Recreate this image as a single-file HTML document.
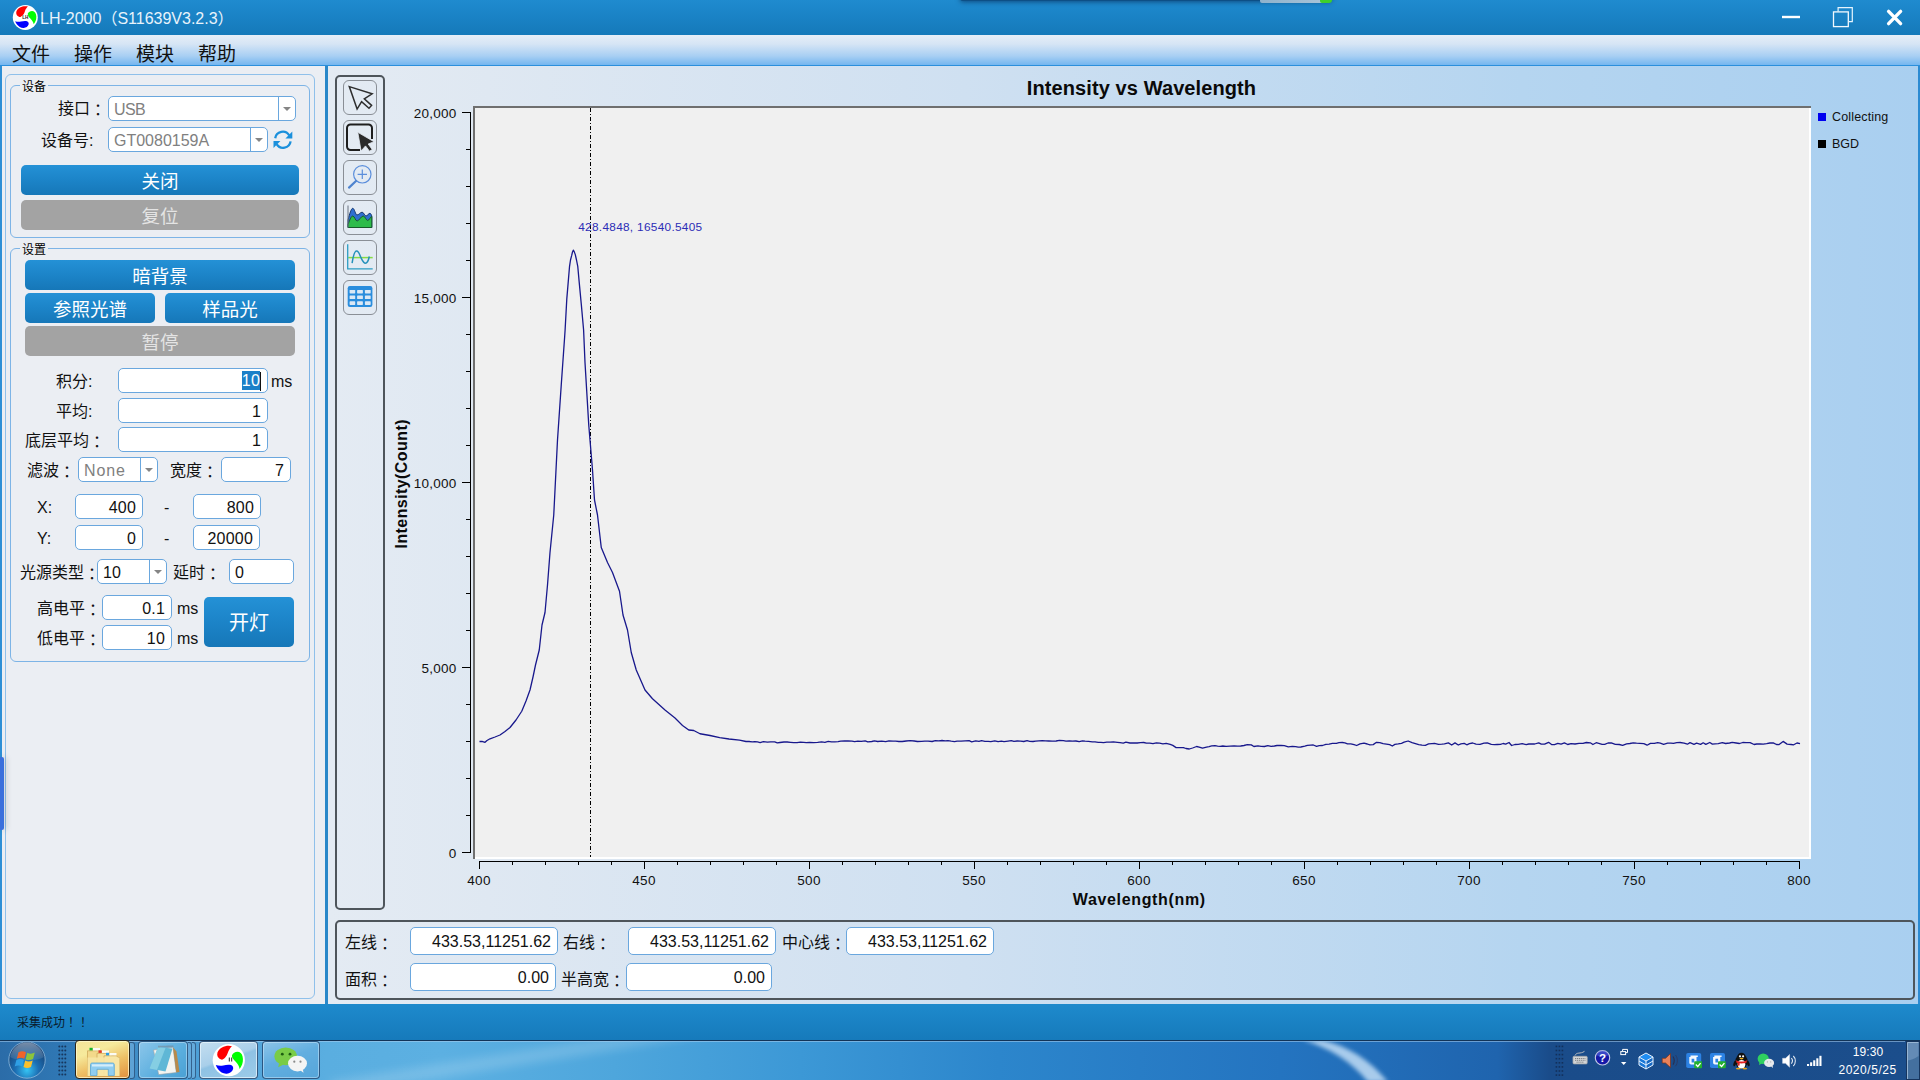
<!DOCTYPE html>
<html lang="zh-CN">
<head>
<meta charset="utf-8">
<title>LH-2000</title>
<style>
*{box-sizing:border-box;margin:0;padding:0}
html,body{width:1920px;height:1080px;overflow:hidden;background:#1a82c4}
body{position:relative;font-family:"Liberation Sans","Noto Sans CJK SC",sans-serif;font-size:15px;color:#111}
.abs{position:absolute}
#titlebar{left:0;top:0;width:1920px;height:35px;background:linear-gradient(#1f8bcf,#1a83c6 45%,#1579b9)}
#title{left:40px;top:8px;font-size:16px;color:#e8f3fb;white-space:nowrap;line-height:22px}
#menubar{left:0;top:35px;width:1920px;height:31px;background:linear-gradient(#e6eef7 0,#d6e5f5 30%,#a8cff3 70%,#74b6ef 100%);border-bottom:1px solid #2b8fdc}
.menu{position:absolute;top:43px;font-size:19px;line-height:24px;color:#101010;white-space:nowrap}
#left{left:0;top:66px;width:326px;height:938px;background:#ebeef3;border-left:2px solid #2d8fd6}
#split{left:325px;top:66px;width:3px;height:938px;background:#2a88c9}
#right{left:328px;top:66px;width:1592px;height:938px;background:linear-gradient(90deg,#e4ebf3 0,#dfe8f2 10%,#cfe0f1 40%,#b5d5f0 75%,#a9cff0 100%)}
#status{left:0;top:1004px;width:1920px;height:36px;background:linear-gradient(#1e8acc,#1a82c4 50%,#167abb)}
#statustext{left:17px;top:1015px;font-size:12px;line-height:16px;color:#0a1a2a;white-space:nowrap}
#taskbar{left:0;top:1040px;width:1920px;height:40px;background:linear-gradient(90deg,#2b6ca8 0,#3079b6 3.6%,#4d9fd6 10%,#5aaee0 17%,#5cb0e2 23%,#4ea6dc 32%,#3c98d6 41.7%,#2c86cc 52%,#2474c0 66.7%,#1f64ae 78%,#1a4c8a 80.7%,#1b4e8c 100%);border-top:1px solid #123458}
.frame{position:absolute;border:1px solid #7db4e6;border-radius:6px}
.gtitle{position:absolute;font-size:12px;line-height:14px;margin-top:1px;background:#ebeef3;padding:0 2px;color:#000}
.lbl{position:absolute;font-size:16px;line-height:20px;padding-top:1px;white-space:nowrap;color:#111}
.inp{position:absolute;height:25px;background:#fff;border:1px solid #6aa7de;border-radius:5px;font-size:16px;letter-spacing:.2px;line-height:25px;text-align:right;padding-right:6px;white-space:nowrap;color:#111}
.cmb{position:absolute;height:25px;background:#fff;border:1px solid #6aa7de;border-radius:5px;font-size:16px;line-height:25px;padding-left:5px;white-space:nowrap;color:#808080}
.cmb i{position:absolute;right:16px;top:0;width:1px;height:23px;background:#6aa7de}
.cmb b{position:absolute;right:4px;top:10px;width:0;height:0;border-left:4px solid transparent;border-right:4px solid transparent;border-top:4px solid #858585}
.btn{position:absolute;height:30px;border-radius:5px;background:linear-gradient(#2491d6,#1c84c8 50%,#1677b8);color:#fff;font-size:18.5px;line-height:34px;text-align:center;white-space:nowrap}
.btn.gray{background:#a3a3a3;color:#e4e4e4}
.tbtn{position:absolute;left:343px;width:34px;height:35px;border:1px solid #8a8f96;border-radius:6px}
.tbtn svg{position:absolute;left:-1px;top:-1px}
.dark{position:absolute;border:2px solid #4e555b;border-radius:5px}
.tick{font-size:13.5px;fill:#111}
.c{font-family:"Noto Sans CJK TC","Noto Sans CJK SC",sans-serif;line-height:0;position:relative;top:1.5px}
.c2{font-family:"Noto Sans CJK TC","Noto Sans CJK SC",sans-serif;line-height:0}
</style>
</head>
<body>
<div id="titlebar" class="abs"></div>
<div id="title" class="abs">LH-2000（S11639V3.2.3）</div>
<div id="menubar" class="abs"></div>
<div class="menu" style="left:12px">文件</div>
<div class="menu" style="left:74px">操作</div>
<div class="menu" style="left:136px">模块</div>
<div class="menu" style="left:198px">帮助</div>
<div id="left" class="abs"></div>
<div id="split" class="abs"></div>
<div id="right" class="abs"></div>
<div class="abs" style="left:1918px;top:66px;width:2px;height:938px;background:#2b8ad2"></div>
<div id="status" class="abs"></div>
<div id="statustext" class="abs">采集成功<span class="c2" lang="zh-TW">！！</span></div>
<div id="taskbar" class="abs"></div>
<!--TITLECTL-->
<svg class="abs" style="left:10px;top:2px" width="32" height="32" viewBox="10 2 32 32"><circle cx="25.3" cy="17.5" r="12.5" fill="#fff"/><path d="M28 6.6C26.8 7.6 25.6 9.2 25 11C24.4 13 23.6 14.6 22.4 15.6C21.4 16.6 20.4 17.4 19.4 17C17.6 16.4 16.2 14.8 16.2 13C16.2 10.6 17.8 8.8 20 7.6C22.4 6.2 25.6 5.8 28 6.6Z" fill="#f00"/><path d="M27.8 13.6C28.6 12 30.2 11 32 11C34 11 35.4 12.4 36 14.4C36.8 17 36.2 20.4 34.8 22.6C34.4 23.4 34 24 33.7 24.3C33.5 22.8 32.8 21.4 31.8 20.2C30.8 18.8 29.4 17.6 28.6 16.4C28 15.4 27.6 14.4 27.8 13.6Z" fill="#0f0"/><path d="M15.2 21.2C17 21.8 19 21.9 21 21.5C23.4 21 25.8 20.8 27.4 21.4C28.6 22 29 23.4 28.6 24.6C28 26.6 26 27.8 23.8 28C21 28.2 18.6 26.6 17 24.6C16.2 23.6 15.6 22.4 15.2 21.2Z" fill="#00f"/><text x="25.3" y="19.4" font-size="4.6px" font-weight="bold" text-anchor="middle" fill="#222" font-family="Liberation Sans, sans-serif">LH</text></svg>
<svg class="abs" style="left:1776px;top:0" width="136" height="35" viewBox="1776 0 136 35"><path d="M1782 17H1800" stroke="#fff" stroke-width="2.4"/><path d="M1838.1 11.5V7.7H1852.3V21.6H1848.8" fill="none" stroke="#e6f4fd" stroke-width="1.2"/><rect x="1833.5" y="11.9" width="14.8" height="14.7" fill="none" stroke="#f2f9fe" stroke-width="1.3"/><path d="M1888.6 11.4L1900.6 23.6M1900.6 11.4L1888.6 23.6" stroke="#fff" stroke-width="3.4" stroke-linecap="round"/></svg>
<div class="abs" style="left:960px;top:-8px;width:372px;height:9px;border-radius:3px;box-shadow:0 1px 5px rgba(0,20,60,.55);background:#0d4f86"></div>
<div class="abs" style="left:1260px;top:0;width:66px;height:3px;background:linear-gradient(90deg,#8fb2cc,#a8c4d8);border-radius:0 0 2px 2px"></div>
<div class="abs" style="left:1320px;top:0;width:12px;height:3px;background:#3fd02a;border-radius:0 0 3px 2px"></div>
<!--/TITLECTL-->
<!--LEFT-->
<div class="frame" style="left:5px;top:74px;width:310px;height:925px;border-color:#8fc0ea"></div>
<div class="frame" style="left:10px;top:85px;width:300px;height:153px"></div>
<div class="gtitle" style="left:20px;top:79px">设备</div>
<div class="lbl" style="left:58px;top:98px">接口<span class="c" lang="zh-TW">：</span></div>
<div class="cmb" style="left:108px;top:96px;width:188px;letter-spacing:-.6px">USB<i></i><b></b></div>
<div class="lbl" style="left:41px;top:130px">设备号:</div>
<div class="cmb" style="left:108px;top:127px;width:160px">GT0080159A<i></i><b></b></div>
<svg class="abs" style="left:272px;top:129px" width="22" height="22" viewBox="0 0 22 22"><g fill="none" stroke="#1b90dc" stroke-width="2.3"><path d="M3.2 9.2A7.6 7.6 0 0 1 17.2 6.4"/><path d="M18.6 12.4A7.6 7.6 0 0 1 4.6 15.2"/></g><path d="M20.3 2.6V9.6H13.4Z" fill="#1b90dc"/><path d="M1.5 19V12H8.4Z" fill="#1b90dc"/></svg>
<div class="btn" style="left:21px;top:165px;width:278px">关闭</div>
<div class="btn gray" style="left:21px;top:200px;width:278px">复位</div>
<div class="frame" style="left:10px;top:248px;width:300px;height:414px"></div>
<div class="gtitle" style="left:20px;top:242px">设置</div>
<div class="btn" style="left:25px;top:260px;width:270px">暗背景</div>
<div class="btn" style="left:25px;top:293px;width:130px">参照光谱</div>
<div class="btn" style="left:165px;top:293px;width:130px">样品光</div>
<div class="btn gray" style="left:25px;top:326px;width:270px">暂停</div>
<div class="lbl" style="left:56px;top:371px">积分:</div>
<div class="inp" style="left:118px;top:368px;width:150px"><span style="background:#1c80c8;color:#fff;display:inline-block;height:19px;line-height:19px;vertical-align:1px">10</span><span style="display:inline-block;width:1px;height:19px;background:#111;vertical-align:-4px"></span></div>
<div class="lbl" style="left:271px;top:371px">ms</div>
<div class="lbl" style="left:56px;top:401px">平均:</div>
<div class="inp" style="left:118px;top:398px;width:150px">1</div>
<div class="lbl" style="left:25px;top:430px">底层平均<span class="c" lang="zh-TW">：</span></div>
<div class="inp" style="left:118px;top:427px;width:150px">1</div>
<div class="lbl" style="left:27px;top:460px">滤波<span class="c" lang="zh-TW">：</span></div>
<div class="cmb" style="left:78px;top:457px;width:80px;letter-spacing:.9px">None<i></i><b></b></div>
<div class="lbl" style="left:170px;top:460px">宽度<span class="c" lang="zh-TW">：</span></div>
<div class="inp" style="left:221px;top:457px;width:70px">7</div>
<div class="lbl" style="left:37px;top:497px">X:</div>
<div class="inp" style="left:75px;top:494px;width:68px">400</div>
<div class="lbl" style="left:164px;top:497px">-</div>
<div class="inp" style="left:193px;top:494px;width:68px">800</div>
<div class="lbl" style="left:37px;top:528px">Y:</div>
<div class="inp" style="left:75px;top:525px;width:68px">0</div>
<div class="lbl" style="left:164px;top:528px">-</div>
<div class="inp" style="left:193px;top:525px;width:67px">20000</div>
<div class="lbl" style="left:20px;top:562px">光源类型<span class="c" lang="zh-TW">：</span></div>
<div class="cmb" style="left:97px;top:559px;width:70px;color:#111">10<i></i><b></b></div>
<div class="lbl" style="left:173px;top:562px">延时<span class="c" lang="zh-TW">：</span></div>
<div class="inp" style="left:229px;top:559px;width:65px;text-align:left;padding-left:5px">0</div>
<div class="lbl" style="left:37px;top:598px">高电平<span class="c" lang="zh-TW">：</span></div>
<div class="inp" style="left:102px;top:595px;width:70px">0.1</div>
<div class="lbl" style="left:177px;top:598px">ms</div>
<div class="lbl" style="left:37px;top:628px">低电平<span class="c" lang="zh-TW">：</span></div>
<div class="inp" style="left:102px;top:625px;width:70px">10</div>
<div class="lbl" style="left:177px;top:628px">ms</div>
<div class="btn" style="left:204px;top:597px;width:90px;height:50px;line-height:53px;font-size:20px">开灯</div>
<div class="abs" style="left:0;top:757px;width:4px;height:73px;background:#3a6fdc;border-radius:0 2px 2px 0;box-shadow:2px 0 6px rgba(0,0,0,.18)"></div>
<!--/LEFT-->
<!--TOOLBAR-->
<div class="dark" style="left:335px;top:75px;width:50px;height:835px"></div>
<div class="tbtn" style="top:80px"><svg width="34" height="34" viewBox="0 0 34 34"><path d="M6.3 6.6L29.1 13.8L21.3 18.8L28.6 25.4L26 28.2L18.6 21.6L14.1 29.1Z" fill="none" stroke="#2e2e2e" stroke-width="1.5" stroke-linejoin="miter"/></svg></div>
<div class="tbtn" style="top:120px"><svg width="34" height="34" viewBox="0 0 34 34"><path d="M17 30H7.5A3.5 3.5 0 0 1 4 26.5V8A3.5 3.5 0 0 1 7.5 4.5H25.5A3.5 3.5 0 0 1 29 8V19" fill="none" stroke="#1e1e1e" stroke-width="2"/><path d="M14.8 12.3L31 21.7L25.2 24L29.2 29.5L26.5 31.2L22.5 25.9L18.1 31Z" fill="#2a2a2a" stroke="#e4ebf3" stroke-width="0.8"/></svg></div>
<div class="tbtn" style="top:160px"><svg width="34" height="34" viewBox="0 0 34 34"><circle cx="19.3" cy="14.3" r="8.7" fill="none" stroke="#5b8edb" stroke-width="1.2"/><path d="M14.6 14.3H24M19.3 9.6V19" stroke="#5b8edb" stroke-width="1.2"/><path d="M13 21L6 27.6" stroke="#4f84cf" stroke-width="2.2" stroke-linecap="round"/></svg></div>
<div class="tbtn" style="top:200px"><svg width="34" height="34" viewBox="0 0 34 34"><path d="M5 27.5V20C6.5 14 8.3 8.3 9.7 8.3C11.5 8.3 12.5 15 14 15C15.8 15 17.3 12.2 19.1 12.2C20.8 12.2 21.6 16 23 16C24.4 16 25.6 13.3 26.9 13.3C27.8 13.3 28.4 15 28.8 16V27.5Z" fill="#2e6fd0" stroke="#17386e" stroke-width="1"/><path d="M5 27.5V24.4C6.5 21 8 16 9.7 16C11.6 16 12.4 21 14.1 21C16 21 18.2 16 20.2 16C22 16 23.2 20.5 24.7 20.5C26.2 20.5 27.4 16.6 28.8 16.6V27.5Z" fill="#2dbb4a" stroke="#175a2a" stroke-width="1"/><path d="M5 5.5V27.5" stroke="#6b7280" stroke-width="1"/></svg></div>
<div class="tbtn" style="top:240px"><svg width="34" height="34" viewBox="0 0 34 34"><path d="M5.2 17.6H29.7" stroke="#86dc45" stroke-width="1.5"/><path d="M4.7 4.3V28.8H29.7" fill="none" stroke="#2d9dc4" stroke-width="1.3"/><path d="M9.1 23.2C10 17 11.5 11 13.6 11C16 11 16.6 15 18 17.7C19.4 20.5 20.6 23.2 22.4 23.2C24.4 23.2 25.6 20 26.3 16.5" fill="none" stroke="#2490ba" stroke-width="1.5"/></svg></div>
<div class="tbtn" style="top:280px"><svg width="34" height="34" viewBox="0 0 34 34"><rect x="4.7" y="6.1" width="24.7" height="20.8" rx="2.2" fill="#2a8ddd"/><g fill="#dbe8f5"><rect x="6.6" y="9.9" width="5.6" height="3.5" rx=".6"/><rect x="14.1" y="9.9" width="5.8" height="3.5" rx=".6"/><rect x="21.9" y="9.9" width="5.8" height="3.5" rx=".6"/><rect x="6.6" y="15.5" width="5.6" height="3.6" rx=".6"/><rect x="14.1" y="15.5" width="5.8" height="3.6" rx=".6"/><rect x="21.9" y="15.5" width="5.8" height="3.6" rx=".6"/><rect x="6.6" y="21.3" width="5.6" height="3.6" rx=".6"/><rect x="14.1" y="21.3" width="5.8" height="3.6" rx=".6"/><rect x="21.9" y="21.3" width="5.8" height="3.6" rx=".6"/></g></svg></div>
<!--/TOOLBAR-->
<!--CHART-->
<svg class="abs" style="left:386px;top:67px" width="1532" height="849" viewBox="386 67 1532 849" font-family="Liberation Sans, sans-serif">
<rect x="473" y="106" width="1338" height="753" fill="#fff"/>
<path d="M473 106H1811V108H475V859H473Z" fill="#6f6f6f"/>
<rect x="475" y="108" width="1334" height="749" fill="#f0f0f0"/>
<path d="M470.5 112V853M461.5 852.5H471M465.5 815.5H471M465.5 778.5H471M465.5 741.5H471M465.5 704.5H471M461.5 667.5H471M465.5 630.5H471M465.5 593.5H471M465.5 556.5H471M465.5 519.5H471M461.5 482.5H471M465.5 445.5H471M465.5 408.5H471M465.5 371.5H471M465.5 334.5H471M461.5 297.5H471M465.5 260.5H471M465.5 223.5H471M465.5 186.5H471M465.5 149.5H471M461.5 112.5H471" stroke="#000" stroke-width="1.4" fill="none" shape-rendering="crispEdges"/>
<path d="M479 861.5H1800M479.5 861V869M512.5 861V865M545.5 861V865M578.5 861V865M611.5 861V865M644.5 861V869M677.5 861V865M710.5 861V865M743.5 861V865M776.5 861V865M809.5 861V869M842.5 861V865M875.5 861V865M908.5 861V865M941.5 861V865M974.5 861V869M1007.5 861V865M1040.5 861V865M1073.5 861V865M1106.5 861V865M1139.5 861V869M1172.5 861V865M1205.5 861V865M1238.5 861V865M1271.5 861V865M1304.5 861V869M1337.5 861V865M1370.5 861V865M1403.5 861V865M1436.5 861V865M1469.5 861V869M1502.5 861V865M1535.5 861V865M1568.5 861V865M1601.5 861V865M1634.5 861V869M1667.5 861V865M1700.5 861V865M1733.5 861V865M1766.5 861V865M1799.5 861V869" stroke="#000" stroke-width="1.4" fill="none" shape-rendering="crispEdges"/>
<text class="tick" x="456.5" y="857.7" text-anchor="end" letter-spacing="0.25">0</text>
<text class="tick" x="456.5" y="672.7" text-anchor="end" letter-spacing="0.25">5,000</text>
<text class="tick" x="456.5" y="487.7" text-anchor="end" letter-spacing="0.25">10,000</text>
<text class="tick" x="456.5" y="302.7" text-anchor="end" letter-spacing="0.25">15,000</text>
<text class="tick" x="456.5" y="117.7" text-anchor="end" letter-spacing="0.25">20,000</text>
<text class="tick" x="479.0" y="885" text-anchor="middle" letter-spacing="0.3">400</text>
<text class="tick" x="644.0" y="885" text-anchor="middle" letter-spacing="0.3">450</text>
<text class="tick" x="809.0" y="885" text-anchor="middle" letter-spacing="0.3">500</text>
<text class="tick" x="974.0" y="885" text-anchor="middle" letter-spacing="0.3">550</text>
<text class="tick" x="1139.0" y="885" text-anchor="middle" letter-spacing="0.3">600</text>
<text class="tick" x="1304.0" y="885" text-anchor="middle" letter-spacing="0.3">650</text>
<text class="tick" x="1469.0" y="885" text-anchor="middle" letter-spacing="0.3">700</text>
<text class="tick" x="1634.0" y="885" text-anchor="middle" letter-spacing="0.3">750</text>
<text class="tick" x="1799.0" y="885" text-anchor="middle" letter-spacing="0.3">800</text>
<text x="1141.5" y="94.6" text-anchor="middle" font-size="20px" font-weight="bold" fill="#0a0a0a" letter-spacing="0.1">Intensity vs Wavelength</text>
<text x="1139.3" y="904.8" text-anchor="middle" font-size="16px" font-weight="bold" fill="#0a0a0a" letter-spacing=".66">Wavelength(nm)</text>
<text transform="translate(407 483.8) rotate(-90)" text-anchor="middle" font-size="16px" font-weight="bold" fill="#0a0a0a" letter-spacing=".42">Intensity(Count)</text>
<rect x="1818" y="113" width="8" height="8" fill="#0000f0"/><text x="1832" y="121" font-size="12.5px" fill="#111" letter-spacing="0.15">Collecting</text>
<rect x="1818" y="140" width="8" height="8" fill="#000"/><text x="1832" y="148" font-size="12.5px" fill="#111">BGD</text>
<path d="M590.5 108V857" stroke="#000" stroke-width="1" stroke-dasharray="4 2 1 2" shape-rendering="crispEdges"/>
<path d="M479.5 741.5 L482 741.3 L485 742.3 L487 740.5 L490 738.8 L495 737 L500 735 L505 731.5 L510 727.5 L516 720 L521.75 711.25 L526 701 L530 690 L533 677 L535.5 665 L539.25 650 L542 625 L545 612.5 L547.5 585 L550 552.5 L553.75 515 L555 490 L557.5 440 L561.25 385 L564.6 337.5 L565.1 330 L566.8 298.9 L568.3 281.1 L569.5 266.7 L570.5 260 L571.7 255.4 L572.5 252 L573.3 250.2 L574.2 251.6 L575.3 254.6 L576.5 260 L577.8 266.7 L579.1 281.1 L581.3 304.4 L583.6 330 L585 362.5 L588.75 425 L592.5 470 L594.5 500 L597.5 515 L601.25 547.5 L607.5 562.5 L612.5 572.5 L619.5 591.25 L623 615 L627.5 630 L631.25 652.5 L636.25 670 L645 690 L652.5 698.75 L665 710 L675 718 L682.5 725.5 L688.75 730 L693.75 730.5 L700 733.75 L710 735.5 L719.7 737.7 L729 739 L739.5 740.1 L746 741.5 L749 741.5 L752.3 741.8 L754.9 741.6 L757.5 741.9 L760.1 742.6 L763.4 741.6 L767.4 742.1 L770.7 741.8 L774.7 741.8 L777.3 742.9 L779.9 742.5 L783.9 742 L787.2 742 L790.5 742.3 L793.8 742.7 L797.1 742.7 L800.4 742.2 L803.7 742.4 L806.3 742.6 L809.6 742.4 L813.6 742.6 L817.6 742.3 L821.6 741.9 L824.9 742.3 L828.2 741.4 L831.5 741.8 L834.8 741.9 L838.1 741.7 L840.7 741.1 L844.7 741 L848 740.9 L852 741.2 L854.6 741.6 L857.9 741.1 L861.2 741.4 L865.2 740.8 L867.8 741.8 L871.8 741.5 L874.4 740.8 L877.7 741.5 L881.7 741.1 L885.7 741.7 L889 740.8 L893 741.1 L895.6 741.2 L898.9 741.5 L902.2 741.5 L906.2 741 L910.2 740.7 L914.2 741 L917.5 741.5 L921.5 741.4 L924.8 741.2 L928.1 741.2 L932.1 741.5 L935.4 740.6 L938.7 740.8 L942 740.5 L945.3 740.8 L947.9 740.7 L951.2 741.2 L954.5 741.6 L957.1 741.1 L961.1 741.1 L965.1 740.8 L969.1 740.7 L971.7 741.8 L975.7 740.9 L979 741.4 L981.6 740.7 L984.9 741.3 L988.2 741.4 L990.8 741.7 L994.8 740.9 L998.1 741.7 L1001.4 741.2 L1004 741.6 L1008 741.1 L1011.3 740.7 L1013.9 741.4 L1017.2 741 L1020.5 741.1 L1023.8 741.5 L1027.1 740.6 L1029.7 741.3 L1033 741.5 L1035.6 741.1 L1038.9 740.9 L1042.2 740.7 L1045.5 740.9 L1048.8 741 L1052.1 741.1 L1056.1 741 L1059.4 740.4 L1063.4 740.6 L1066 741.2 L1069.3 740.8 L1072.6 741.2 L1075.9 741 L1079.2 741.7 L1082.5 740.9 L1085.1 741.2 L1088.4 741.4 L1092.4 741.9 L1095 741.8 L1098.3 742.3 L1100.9 742.4 L1103.5 742.6 L1106.8 742.2 L1110.1 742.2 L1113.4 741.9 L1117.4 742.4 L1120 742.7 L1123.3 743.1 L1125.9 742.2 L1129.9 743 L1133.2 742.9 L1137.2 743 L1140.5 742.6 L1143.8 742.5 L1146.4 743.1 L1149.7 743.1 L1153 743.6 L1156.3 742.8 L1159.6 743.2 L1162.9 743.8 L1166.2 743.3 L1170.2 744.4 L1172.8 745.4 L1176.1 747.6 L1180.1 747.7 L1183.4 747.6 L1186 748.5 L1189.3 749 L1192.6 748 L1196.6 746.5 L1199.2 747.1 L1202.5 748.2 L1206.5 747.1 L1209.1 746.6 L1211.7 745.9 L1215 745.7 L1217.6 746.1 L1220.2 746.4 L1222.8 746 L1226.1 746.3 L1230.1 746.1 L1234.1 746 L1237.4 746.2 L1240.7 746 L1244 745.5 L1247.3 744.6 L1251.3 744.9 L1253.9 746.5 L1257.9 745.8 L1261.2 746.4 L1264.5 746.5 L1267.8 745.6 L1271.1 746.3 L1274.4 746 L1277 745.5 L1281 745.5 L1284.3 745.7 L1288.3 746.8 L1292.3 746.4 L1295.6 746.7 L1298.2 747.2 L1300.8 747 L1304.8 746.2 L1307.4 745.4 L1310.7 745.1 L1313.3 745 L1316.6 746.3 L1319.2 745.7 L1322.5 745.5 L1325.8 744.4 L1329.1 744.1 L1332.4 743.4 L1336.4 743.3 L1339 742.6 L1342.3 742.5 L1344.9 742.9 L1347.5 743.8 L1350.8 743.9 L1354.1 744.6 L1356.7 745.5 L1360 743.9 L1364 743.1 L1367.3 744 L1369.9 744.8 L1373.2 744.6 L1376.5 742.3 L1379.8 742.6 L1383.1 743.7 L1386.4 744.1 L1389.7 744.7 L1392.3 746 L1394.9 744.4 L1398.2 743.9 L1401.5 743.3 L1404.1 742.2 L1408.1 741 L1412.1 742.7 L1415.4 743.7 L1418.7 744.7 L1422 745.2 L1425.3 745.3 L1428.6 743.8 L1431.9 743.6 L1434.5 743.4 L1438.5 744.3 L1441.8 744.2 L1444.4 743.9 L1448.4 742.9 L1451.7 745 L1455 742.9 L1458.3 745 L1460.9 743.9 L1464.2 743.4 L1466.8 744.8 L1469.4 743.7 L1472.7 743 L1476 744.2 L1480 744.4 L1484 743.1 L1487.3 742.8 L1491.3 744.3 L1494.6 744.7 L1497.2 744.5 L1500.5 744.3 L1503.1 743.5 L1505.7 744.1 L1509 742.5 L1511.6 745.5 L1514.9 744.5 L1518.2 744.3 L1522.2 743.7 L1526.2 744.7 L1528.8 744 L1531.4 744 L1534.7 744 L1538.7 742.8 L1541.3 744.1 L1544.6 744.2 L1548.6 742.3 L1551.9 744.7 L1554.5 744.6 L1557.8 743.4 L1561.1 744.1 L1564.4 742.9 L1567.7 744.5 L1571 743.7 L1575 744 L1579 743.4 L1583 743.3 L1586.3 742.5 L1590.3 742.8 L1592.9 744.5 L1596.2 742.7 L1598.8 743.3 L1602.1 744.4 L1604.7 744.3 L1608 743 L1611.3 742.9 L1615.3 744.4 L1619.3 744.5 L1622.6 745.4 L1626.6 743.8 L1629.9 743.5 L1633.2 742.8 L1636.5 743.1 L1639.8 743.3 L1643.8 743.6 L1647.1 745.2 L1650.4 743.4 L1654.4 743.3 L1657.7 742.6 L1660.3 743.1 L1663.6 744.3 L1667.6 743.2 L1670.9 743.2 L1673.5 743.4 L1676.8 742.6 L1680.1 742.5 L1684.1 743.2 L1687.4 744.2 L1690 742.6 L1694 744.4 L1696.6 743.2 L1700.6 744.4 L1703.2 742.8 L1705.8 744.4 L1709.8 742.5 L1712.4 744.1 L1715 743.8 L1718.3 743.7 L1722.3 742.6 L1725.6 743.5 L1729.6 743 L1732.2 742.4 L1736.2 743 L1739.5 743.5 L1742.8 742.5 L1746.1 742.6 L1750.1 742.6 L1754.1 744.5 L1756.7 744 L1760 744 L1763.3 744.1 L1766.6 743.6 L1769.9 743 L1773.2 742.8 L1776.5 744.5 L1779.1 744.6 L1783.1 741.4 L1787.1 744.1 L1791.1 744.5 L1793.7 744.8 L1797 743 L1800 743.6" fill="none" stroke="#18188c" stroke-width="1.3" stroke-linejoin="round"/>
<text x="578.2" y="230.6" font-size="11.8px" letter-spacing=".31" fill="#2c2cb6">428.4848, 16540.5405</text>
</svg>
<!--/CHART-->
<!--BOTTOM-->
<div class="dark" style="left:335px;top:920px;width:1580px;height:80px"></div>
<div class="lbl" style="left:345px;top:932px">左线<span class="c" lang="zh-TW">：</span></div>
<div class="inp" style="left:410px;top:927px;width:148px;height:28px;line-height:28px;letter-spacing:0">433.53,11251.62</div>
<div class="lbl" style="left:563px;top:932px">右线<span class="c" lang="zh-TW">：</span></div>
<div class="inp" style="left:628px;top:927px;width:148px;height:28px;line-height:28px;letter-spacing:0">433.53,11251.62</div>
<div class="lbl" style="left:782px;top:932px">中心线<span class="c" lang="zh-TW">：</span></div>
<div class="inp" style="left:846px;top:927px;width:148px;height:28px;line-height:28px;letter-spacing:0">433.53,11251.62</div>
<div class="lbl" style="left:345px;top:969px">面积<span class="c" lang="zh-TW">：</span></div>
<div class="inp" style="left:410px;top:963px;width:146px;height:28px;line-height:28px;letter-spacing:0">0.00</div>
<div class="lbl" style="left:561px;top:969px">半高宽<span class="c" lang="zh-TW">：</span></div>
<div class="inp" style="left:626px;top:963px;width:146px;height:28px;line-height:28px;letter-spacing:0">0.00</div>
<!--/BOTTOM-->
<!--TASKBAR-->
<div class="abs" style="left:0;top:1041px;width:1920px;height:39px;overflow:hidden">
<div class="abs" style="left:330px;top:-30px;width:420px;height:14px;background:rgba(255,255,255,.16);transform:rotate(-9deg);transform-origin:left top;filter:blur(4px);top:40px"></div>
<svg class="abs" style="left:1290px;top:0" width="110" height="39" viewBox="1290 1041 110 39"><defs><filter id="bl" x="-20%" y="-20%" width="140%" height="140%"><feGaussianBlur stdDeviation="2.2"/></filter></defs><path d="M1303 1040C1330 1048 1352 1062 1368 1082L1388 1082C1370 1060 1348 1046 1322 1040Z" fill="#cfe6fa" opacity=".78" filter="url(#bl)"/></svg>
<div class="abs" style="left:0;top:0;width:1905px;height:1px;background:rgba(170,205,238,.55)"></div>
</div>
<svg class="abs" style="left:6px;top:1040px" width="62" height="40" viewBox="6 1040 62 40"><defs><radialGradient id="orb" cx="50%" cy="78%" r="70%"><stop offset="0" stop-color="#35c4f4"/><stop offset=".45" stop-color="#1c6fb4"/><stop offset="1" stop-color="#173f70"/></radialGradient><linearGradient id="orbhi" x1="0" y1="0" x2="0" y2="1"><stop offset="0" stop-color="#fff" stop-opacity=".75"/><stop offset="1" stop-color="#fff" stop-opacity=".12"/></linearGradient></defs><circle cx="27" cy="1060" r="18.2" fill="url(#orb)" stroke="#9cc4e4" stroke-opacity=".7" stroke-width="1"/><path d="M10.2 1057A17 17 0 0 1 43.8 1057C38 1061.500 16 1061.500 10.200 1057Z" fill="url(#orbhi)" opacity=".55"/><path d="M18.500 1052.200C21 1050.800 23.500 1050.700 26 1052.300L24.300 1058.700C21.800 1057.300 19.300 1057.400 16.800 1058.700Z" fill="#f0642a"/><path d="M27.300 1052.800C29.800 1054.200 32.300 1054 34.800 1052.600L33.100 1059C30.600 1060.400 28.100 1060.500 25.600 1059.200Z" fill="#8cc43c"/><path d="M16.400 1060.100C18.900 1058.800 21.400 1058.700 23.900 1060.100L22.200 1066.500C19.700 1065.100 17.200 1065.200 14.700 1066.600Z" fill="#2f9fe4"/><path d="M25.200 1060.600C27.700 1062 30.200 1061.800 32.700 1060.400L31 1066.900C28.500 1068.300 26 1068.400 23.500 1067Z" fill="#fbc02d"/><g fill="#17375e"><circle cx="59.300" cy="1046.500" r="1"/><circle cx="62.300" cy="1046.500" r="1"/><circle cx="65.300" cy="1046.500" r="1"/><circle cx="59.300" cy="1050.500" r="1"/><circle cx="62.300" cy="1050.500" r="1"/><circle cx="65.300" cy="1050.500" r="1"/><circle cx="59.300" cy="1054.500" r="1"/><circle cx="62.300" cy="1054.500" r="1"/><circle cx="65.300" cy="1054.500" r="1"/><circle cx="59.300" cy="1058.500" r="1"/><circle cx="62.300" cy="1058.500" r="1"/><circle cx="65.300" cy="1058.500" r="1"/><circle cx="59.300" cy="1062.500" r="1"/><circle cx="62.300" cy="1062.500" r="1"/><circle cx="65.300" cy="1062.500" r="1"/><circle cx="59.300" cy="1066.500" r="1"/><circle cx="62.300" cy="1066.500" r="1"/><circle cx="65.300" cy="1066.500" r="1"/><circle cx="59.300" cy="1070.500" r="1"/><circle cx="62.300" cy="1070.500" r="1"/><circle cx="65.300" cy="1070.500" r="1"/><circle cx="59.300" cy="1074.500" r="1"/><circle cx="62.300" cy="1074.500" r="1"/><circle cx="65.300" cy="1074.500" r="1"/></g></svg>
<div class="abs" style="left:75px;top:1040px;width:55px;height:39px;border:1px solid #2b2418;border-radius:4px;background:linear-gradient(160deg,#f4e49a 0,#f6ea9c 30%,#eec066 60%,#e08f3e 100%);box-shadow:inset 0 0 0 1px rgba(255,250,210,.75)"></div>
<div class="abs" style="left:130px;top:1042px;width:5px;height:37px;border:1px solid rgba(20,50,90,.6);border-left:none;border-radius:0 3px 3px 0;background:rgba(120,180,225,.55)"></div>
<div class="abs" style="left:138px;top:1041px;width:50px;height:38px;border:1px solid rgba(20,50,90,.7);border-radius:4px;background:linear-gradient(135deg,#8cc6ea,#5aaede 60%,#4aa0d4);box-shadow:inset 0 0 0 1px rgba(220,240,255,.45)"></div>
<div class="abs" style="left:188px;top:1042px;width:4px;height:37px;border:1px solid rgba(20,50,90,.6);border-left:none;border-radius:0 3px 3px 0;background:rgba(120,180,225,.55)"></div>
<div class="abs" style="left:192px;top:1042px;width:4px;height:37px;border:1px solid rgba(20,50,90,.6);border-left:none;border-radius:0 3px 3px 0;background:rgba(120,180,225,.55)"></div>
<div class="abs" style="left:199px;top:1041px;width:59px;height:38px;border:1px solid rgba(20,50,90,.75);border-radius:4px;background:linear-gradient(160deg,#c4def0 0,#a9cfea 45%,#8fc2e4 50%,#9ccbe8 100%);box-shadow:inset 0 0 0 1px rgba(235,248,255,.7)"></div>
<div class="abs" style="left:262px;top:1041px;width:58px;height:38px;border:1px solid rgba(20,50,90,.7);border-radius:4px;background:linear-gradient(160deg,#8cc4e8 0,#62aee0 45%,#56a6da 100%);box-shadow:inset 0 0 0 1px rgba(220,240,255,.45)"></div>
<svg class="abs" style="left:75px;top:1040px" width="250" height="40" viewBox="75 1040 250 40"><path d="M87.500 1050.800H100.500L102 1052.500H104V1076H87.500Z" fill="#f3d98a" stroke="#caa352" stroke-width=".7"/><path d="M97 1053.300H109.500L111 1055H113V1076H97Z" fill="#f6e19a" stroke="#caa352" stroke-width=".7"/><path d="M104 1055.800H116.500L118 1057.500H119.500V1076H104Z" fill="#f8e7a8" stroke="#caa352" stroke-width=".7"/><rect x="89.500" y="1047.800" width="3.200" height="2.600" fill="#19b52b"/><rect x="93" y="1048" width="7" height="2.400" fill="#fbfbf4"/><rect x="98.500" y="1050.300" width="3.200" height="2.600" fill="#e0392b"/><rect x="102" y="1050.500" width="7" height="2.400" fill="#fbfbf4"/><rect x="106" y="1052.800" width="3.200" height="2.600" fill="#2e9de0"/><rect x="109.500" y="1053" width="7" height="2.400" fill="#fbfbf4"/><path d="M87.500 1057.500H119.500V1076H87.500Z" fill="#f7e6a4" opacity=".9"/><path d="M90.500 1064.500C90.500 1063.500 91.300 1063 92.300 1063H112.500C113.700 1063 114.300 1063.700 114.300 1064.700V1075.600H108.300V1069.300H97V1075.600H90.500Z" fill="#8fcdf0" stroke="#58a6d6" stroke-width=".8"/><path d="M92 1064.300H113V1066.500H92Z" fill="#d3edfb"/>
<path d="M153.500 1050L173 1047.300L176.300 1072.500L158.700 1074.600Z" fill="#f4f4f0" stroke="#9aa2a8" stroke-width=".6"/><path d="M173 1047.300L176.500 1051.500L179.500 1072L176.300 1072.500Z" fill="#b98a4a"/><path d="M149.500 1068.500L158 1047.300L172.500 1048.500L165.500 1071.500Z" fill="#5fb7d6"/><path d="M149.500 1068.500L158 1047.300L165.500 1048L157 1070Z" fill="#8fd3e6" opacity=".8"/><path d="M158.500 1046.600L173.200 1046.300" stroke="#7a7f86" stroke-width="1.600" stroke-dasharray="1 1"/>
<circle cx="228.800" cy="1060.200" r="16.100" fill="#fff"/><path d="M232 1046.200C230.500 1047.500 229 1049.600 228.200 1051.800C227.400 1054.400 226.400 1056.400 225 1057.700C223.700 1059 222.400 1060 221.200 1059.500C218.900 1058.700 217.200 1056.700 217.200 1054.400C217.200 1051.400 219.200 1049.100 222 1047.500C225 1045.700 229 1045.200 232 1046.200Z" fill="#f00"/><path d="M232 1055.200C233 1053.100 235 1051.800 237.400 1051.800C240 1051.800 241.800 1053.600 242.500 1056.200C243.500 1059.500 242.800 1063.900 241 1066.700C240.500 1067.700 240 1068.500 239.600 1068.900C239.300 1067 238.400 1065.200 237.200 1063.600C235.900 1061.800 234.100 1060.300 233.100 1058.800C232.300 1057.500 231.800 1056.200 232 1055.200Z" fill="#0f0"/><path d="M215.800 1065C218.100 1065.700 220.700 1065.900 223.300 1065.400C226.300 1064.700 229.400 1064.500 231.500 1065.200C233 1066 233.500 1067.800 233 1069.300C232.200 1071.900 229.700 1073.400 226.800 1073.700C223.200 1074 220.200 1071.900 218.100 1069.300C217.100 1068.100 216.300 1066.500 215.800 1065Z" fill="#00f"/><path d="M229.300 1057.500V1061.500M231.700 1057.500V1061.500" stroke="#111" stroke-width=".9"/>
<ellipse cx="285.700" cy="1056.300" rx="11.300" ry="8.900" fill="#79cc47"/><path d="M279 1063L278.300 1067.200L283.500 1064.600Z" fill="#79cc47"/><circle cx="282.300" cy="1054.200" r="1.400" fill="#1d5c10"/><circle cx="290" cy="1054.200" r="1.400" fill="#1d5c10"/><ellipse cx="297.500" cy="1063.600" rx="9.500" ry="7.800" fill="#f4f4f4"/><path d="M300.500 1070.500L303.500 1072.700L302.800 1069Z" fill="#f4f4f4"/><circle cx="294.300" cy="1061.700" r="1.100" fill="#8a8a8a"/><circle cx="300.500" cy="1061.700" r="1.100" fill="#8a8a8a"/></svg>
<svg class="abs" style="left:1550px;top:1040px" width="370" height="40" viewBox="1550 1040 370 40" font-family="Liberation Sans, sans-serif"><g fill="#13305a"><rect x="1555.6" y="1045.6" width="1.6" height="1.6"/><rect x="1558.6" y="1045.6" width="1.6" height="1.6"/><rect x="1561.6" y="1045.6" width="1.6" height="1.6"/><rect x="1555.6" y="1049.7" width="1.6" height="1.6"/><rect x="1558.6" y="1049.7" width="1.6" height="1.6"/><rect x="1561.6" y="1049.7" width="1.6" height="1.6"/><rect x="1555.6" y="1053.8" width="1.6" height="1.6"/><rect x="1558.6" y="1053.8" width="1.6" height="1.6"/><rect x="1561.6" y="1053.8" width="1.6" height="1.6"/><rect x="1555.6" y="1057.9" width="1.6" height="1.6"/><rect x="1558.6" y="1057.9" width="1.6" height="1.6"/><rect x="1561.6" y="1057.9" width="1.6" height="1.6"/><rect x="1555.6" y="1062.0" width="1.6" height="1.6"/><rect x="1558.6" y="1062.0" width="1.6" height="1.6"/><rect x="1561.6" y="1062.0" width="1.6" height="1.6"/><rect x="1555.6" y="1066.1" width="1.6" height="1.6"/><rect x="1558.6" y="1066.1" width="1.6" height="1.6"/><rect x="1561.6" y="1066.1" width="1.6" height="1.6"/><rect x="1555.6" y="1070.2" width="1.6" height="1.6"/><rect x="1558.6" y="1070.2" width="1.6" height="1.6"/><rect x="1561.6" y="1070.2" width="1.6" height="1.6"/><rect x="1555.6" y="1074.3" width="1.6" height="1.6"/><rect x="1558.6" y="1074.3" width="1.6" height="1.6"/><rect x="1561.6" y="1074.3" width="1.6" height="1.6"/></g>
<path d="M1575 1055.500C1577 1051.500 1580 1054.500 1584.500 1051.300" fill="none" stroke="#b9bcc0" stroke-width="1"/><rect x="1573" y="1056.300" width="14.200" height="7.600" rx="1" fill="#d2d4d6" stroke="#a4a7aa" stroke-width=".8"/><path d="M1575 1058.500H1585.400M1575 1060.300H1585.400M1576.500 1062.200H1584" stroke="#7d8084" stroke-width="1" stroke-dasharray="1.200 .7"/>
<circle cx="1602.500" cy="1057.800" r="7.200" fill="#1518a8" stroke="#c5cbe6" stroke-width="1.100"/><path d="M1596.500 1055A6.300 6.300 0 0 1 1608.500 1055C1605 1057 1600 1057 1596.500 1055Z" fill="#5a6fe0" opacity=".55"/><text x="1602.500" y="1062" font-size="11.500px" font-weight="bold" fill="#fff" text-anchor="middle">?</text>
<path d="M1622.600 1051V1049.400H1627.500V1052.600H1626" fill="none" stroke="#fff" stroke-width="1"/><rect x="1620.800" y="1051.600" width="4.800" height="3" fill="none" stroke="#fff" stroke-width="1"/><path d="M1621 1062H1626.400L1623.700 1064.900Z" fill="#fff"/>
<path d="M1646 1053L1653 1057L1646 1061L1639 1057Z" fill="#1f8df2"/><path d="M1639 1057V1065L1646 1069V1061Z" fill="#1a78d8"/><path d="M1653 1057V1065L1646 1069V1061Z" fill="#1668c2"/><path d="M1646 1053L1653 1057V1065L1646 1069L1639 1065V1057ZM1639 1057L1646 1061L1653 1057M1646 1061V1069M1639 1061L1646 1065L1653 1061" fill="none" stroke="#eaf4ff" stroke-width="1"/>
<path d="M1662.200 1058.300H1665.500L1670.500 1053.600V1067.600L1665.500 1063H1662.200Z" fill="#e8825a" stroke="#7a2e14" stroke-width=".7"/><path d="M1673 1056.500C1674.600 1058.500 1674.600 1062.500 1673 1064.600" fill="none" stroke="#2a2f50" stroke-width="1.200"/><path d="M1675.500 1055C1678 1058 1678 1063.200 1675.500 1066.200" fill="none" stroke="#2a3a66" stroke-width="1"/>
<g id="tq"><rect x="1686.200" y="1053" width="15" height="15" rx="1.800" fill="#2c82e4"/><path d="M1690.500 1055.500V1057H1689.300V1062.800A1.800 1.800 0 0 0 1691.100 1064.600H1696.500V1057H1697.800V1055.500M1691.600 1058.800H1694.300V1062.400H1691.600Z" fill="#f4f8fd" fill-rule="evenodd"/><rect x="1694.200" y="1061.300" width="7.800" height="7" rx=".8" fill="#22b02e"/><path d="M1695.800 1064.500L1697.800 1066.500L1700.600 1063.200" fill="none" stroke="#fff" stroke-width="1.300"/></g><use href="#tq" x="23.800"/>
<ellipse cx="1741.500" cy="1061.500" rx="6.200" ry="7" fill="#111"/><circle cx="1741.500" cy="1057" r="4.300" fill="#111"/><ellipse cx="1741.500" cy="1064.200" rx="3.800" ry="4.200" fill="#fff"/><path d="M1735.700 1060.300C1739 1062 1744 1062 1747.300 1060.300L1747.600 1062.200C1744 1063.800 1739 1063.800 1735.400 1062.200Z" fill="#e02020"/><path d="M1738 1062.500L1737.600 1065.800L1739.600 1065.400L1739.700 1062.800Z" fill="#e02020"/><circle cx="1740" cy="1056.300" r="1.100" fill="#fff"/><circle cx="1743.100" cy="1056.300" r="1.100" fill="#fff"/><ellipse cx="1741.500" cy="1058.600" rx="2" ry=".8" fill="#f4b41a"/><ellipse cx="1738.300" cy="1068.600" rx="2.400" ry=".9" fill="#e8a41a"/><ellipse cx="1744.800" cy="1068.600" rx="2.400" ry=".9" fill="#e8a41a"/><ellipse cx="1734.800" cy="1063.500" rx="1.300" ry="3" fill="#111" transform="rotate(20 1734.800 1063.500)"/><ellipse cx="1748.200" cy="1063.500" rx="1.300" ry="3" fill="#111" transform="rotate(-20 1748.200 1063.500)"/>
<ellipse cx="1763.200" cy="1058.800" rx="5.600" ry="5.200" fill="#2fd060"/><path d="M1759.500 1062.500L1759 1065L1762 1063.600Z" fill="#2fd060"/><ellipse cx="1769.100" cy="1062.900" rx="5" ry="4.200" fill="#e6e9ec"/><path d="M1771 1066.500L1773 1068L1772.600 1065.600Z" fill="#e6e9ec"/><circle cx="1767.400" cy="1061.900" r=".6" fill="#aaa"/><circle cx="1770.700" cy="1061.900" r=".6" fill="#aaa"/>
<path d="M1782.600 1058.300H1785.500L1789.600 1054.500V1067.200L1785.500 1063.300H1782.600Z" fill="#fff" stroke="#c9d4e2" stroke-width=".6"/><path d="M1791.400 1058.200C1792.600 1059.600 1792.600 1062 1791.400 1063.600" fill="none" stroke="#e8eef6" stroke-width="1.100"/><path d="M1793.300 1056C1796 1058.600 1796 1063.300 1793.300 1066" fill="none" stroke="#dfe7f2" stroke-width="1.100"/>
<g fill="#fff"><rect x="1807" y="1064" width="2.100" height="2"/><rect x="1810.100" y="1062.300" width="2.100" height="3.700"/><rect x="1813.200" y="1060.300" width="2.100" height="5.700"/><rect x="1816.300" y="1058.300" width="2.100" height="7.700"/><rect x="1819.400" y="1055.800" width="2.100" height="10.200"/></g>
<text x="1868" y="1055.900" font-size="12px" fill="#fff" text-anchor="middle" letter-spacing=".1">19:30</text><text x="1867.600" y="1073.800" font-size="12px" fill="#fff" text-anchor="middle" letter-spacing=".55">2020/5/25</text>
<rect x="1906.500" y="1041.500" width="13" height="38" fill="#44709f" stroke="#16355e" stroke-width="1"/><path d="M1907.500 1042.500H1918.500V1056C1914 1059 1911 1060 1907.500 1060.500Z" fill="#7fa3c8" opacity=".55"/><path d="M1907.500 1079V1042.500H1918.500" fill="none" stroke="#a9c4de" stroke-width="1" opacity=".8"/></svg>
<!--/TASKBAR-->
</body>
</html>
